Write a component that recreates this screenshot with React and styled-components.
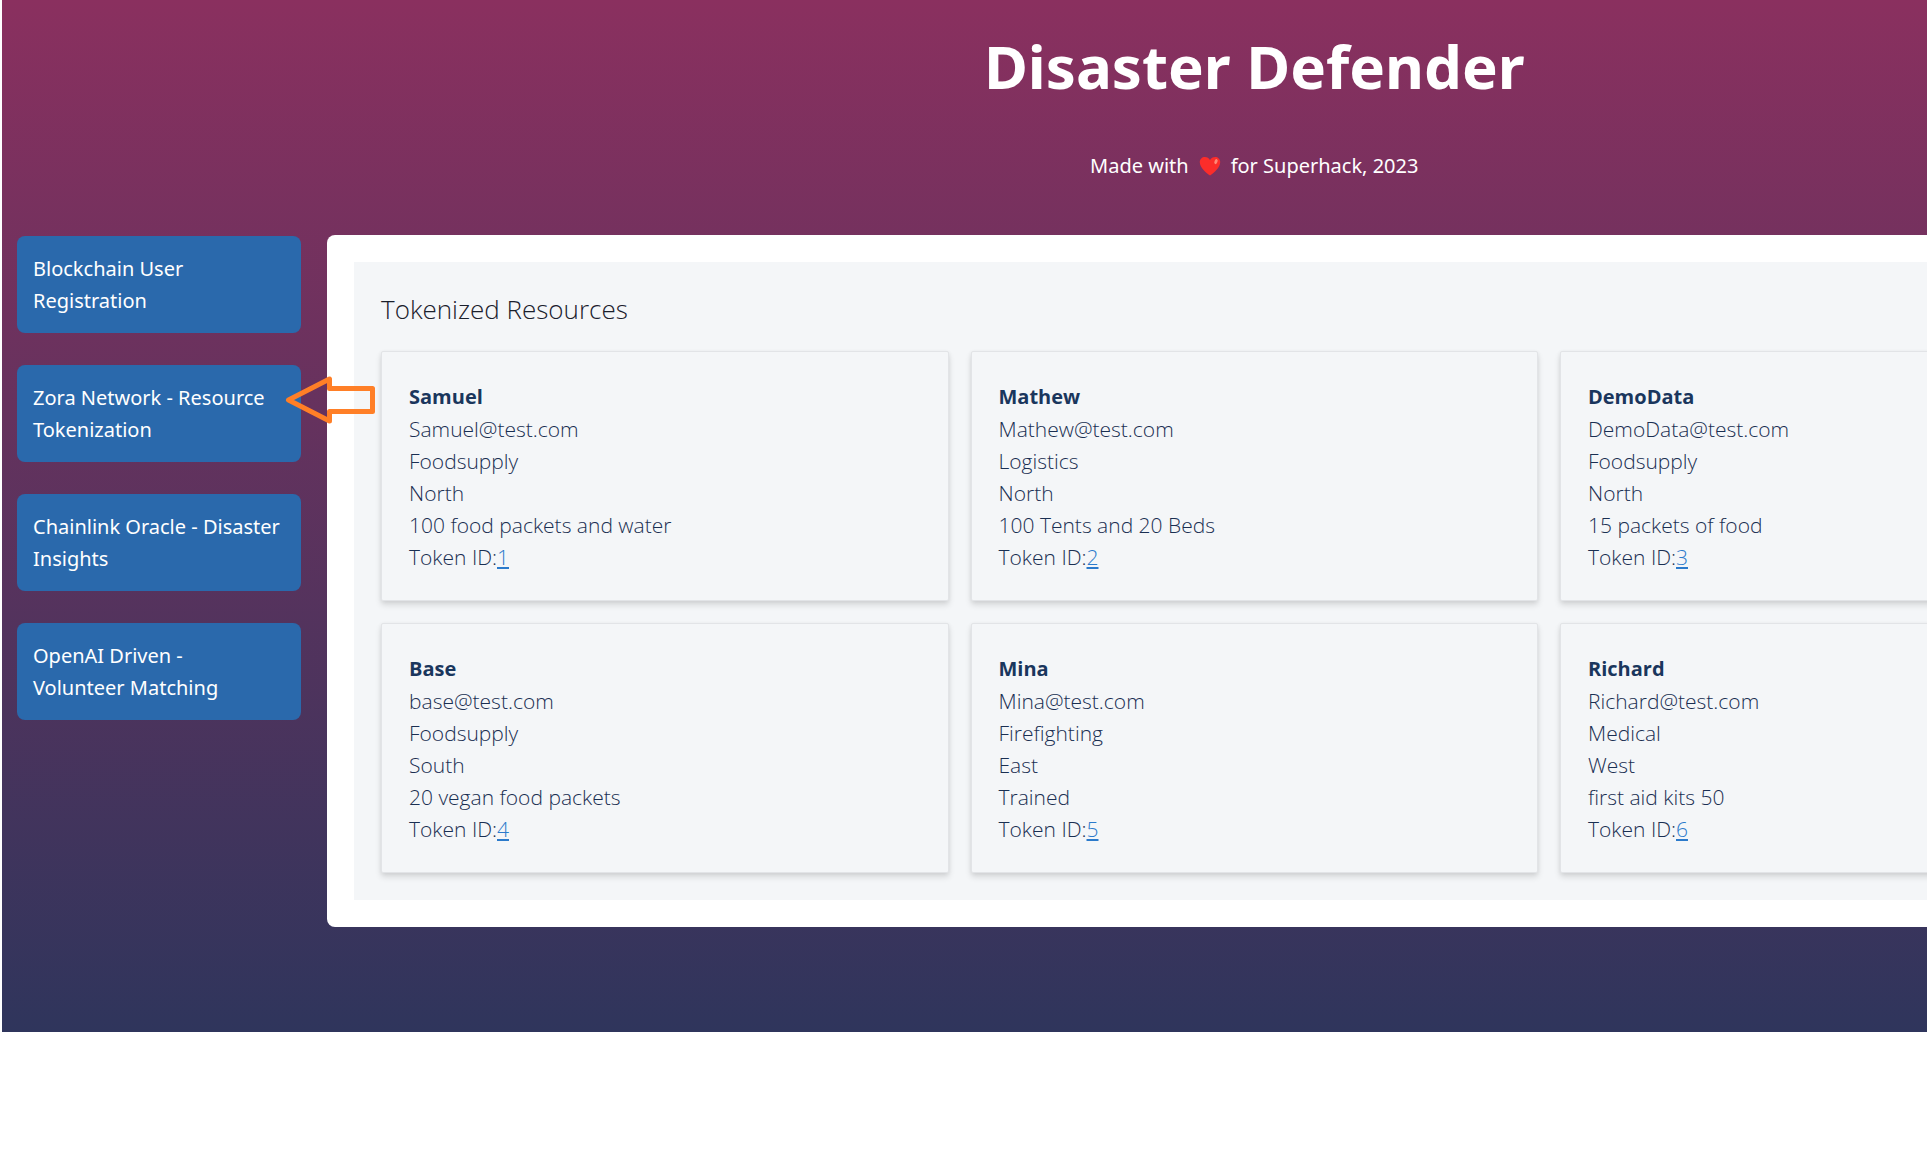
import React from 'react';
import styled, { createGlobalStyle } from 'styled-components';

const GlobalStyle = createGlobalStyle`
  * {
    box-sizing: border-box;
  }
  body {
    margin: 0;
    background: #fff;
    font-family: 'Noto Sans', 'Open Sans', sans-serif;
    font-size: 20px;
    line-height: 32px;
  }
`;

const Viewport = styled.div`
  overflow-x: hidden;
  padding-left: 2px;
`;

const Page = styled.div`
  width: 114%;
  display: grid;
  grid-template-columns: 284px minmax(0, 1fr);
  column-gap: 26px;
  padding: 0 15px 105px;
  background: linear-gradient(to bottom, #8a305f, #2f355c);
`;

const Header = styled.header`
  grid-column: 2;
  display: flex;
  flex-direction: column;
  align-items: center;
  gap: 44px;
  padding: 26px 0 53px;
  color: #fff;
`;

const Title = styled.h1`
  margin: 0;
  font-size: 60px;
  font-weight: 700;
  line-height: 80px;
`;

const Tagline = styled.p`
  display: flex;
  align-items: center;
  gap: 10px;
  margin: 0;
`;

const Sidebar = styled.nav`
  padding-top: 1px;
`;

const NavList = styled.ul`
  display: flex;
  flex-direction: column;
  gap: 32px;
  margin: 0;
  padding: 0;
  list-style: none;
`;

const NavItem = styled.li`
  position: relative;
`;

const NavButton = styled.button`
  display: block;
  width: 100%;
  padding: 17px 16px 16px;
  border: 0;
  border-radius: 8px;
  background: #2a69ac;
  color: #fff;
  font: inherit;
  text-align: left;
  cursor: pointer;
`;

const Pointer = styled.svg`
  position: absolute;
  top: 10px;
  right: -75px;
  z-index: 1;
  pointer-events: none;
`;

const Main = styled.main`
  padding: 27px;
  border-radius: 8px;
  background: #fff;
`;

const Resources = styled.section`
  padding: 27px;
  background: #f4f6f8;
  font-family: 'Open Sans', 'Noto Sans', sans-serif;
`;

const SectionTitle = styled.h2`
  margin: 0 0 22px;
  color: #1a202c;
  font-size: 26px;
  font-weight: 350;
  line-height: 40px;
`;

const CardGrid = styled.div`
  display: grid;
  grid-template-columns: repeat(3, 1fr);
  gap: 22px;
`;

const Card = styled.article`
  padding: 28px 27px 27px;
  border: 1px solid #e2e4e7;
  border-radius: 2px;
  background: #f4f6f8;
  box-shadow: 0 4px 6px rgba(0, 0, 0, 0.12), 0 1px 4px rgba(0, 0, 0, 0.06);
`;

const Name = styled.h3`
  margin: 0;
  color: #1a365d;
  font-size: 20px;
  font-weight: 700;
  line-height: 33px;
`;

const Detail = styled.p`
  margin: 0;
  color: #1a2f52;
  font-size: 21px;
  font-weight: 350;
`;

const TokenLink = styled.a`
  color: #2b7acb;
  text-decoration: underline;
  text-decoration-thickness: 2px;
  text-underline-offset: 2px;
`;

const navItems = [
  { label: 'Blockchain User Registration' },
  { label: 'Zora Network - Resource Tokenization', active: true },
  { label: 'Chainlink Oracle - Disaster Insights' },
  { label: 'OpenAI Driven - Volunteer\u00a0Matching' },
];

const resources = [
  {
    id: 1,
    name: 'Samuel',
    email: 'Samuel@test.com',
    type: 'Foodsupply',
    region: 'North',
    description: '100 food packets and water',
  },
  {
    id: 2,
    name: 'Mathew',
    email: 'Mathew@test.com',
    type: 'Logistics',
    region: 'North',
    description: '100 Tents and 20 Beds',
  },
  {
    id: 3,
    name: 'DemoData',
    email: 'DemoData@test.com',
    type: 'Foodsupply',
    region: 'North',
    description: '15 packets of food',
  },
  {
    id: 4,
    name: 'Base',
    email: 'base@test.com',
    type: 'Foodsupply',
    region: 'South',
    description: '20 vegan food packets',
  },
  {
    id: 5,
    name: 'Mina',
    email: 'Mina@test.com',
    type: 'Firefighting',
    region: 'East',
    description: 'Trained',
  },
  {
    id: 6,
    name: 'Richard',
    email: 'Richard@test.com',
    type: 'Medical',
    region: 'West',
    description: 'first aid kits 50',
  },
];

const Heart = () => (
  <svg width="22" height="20" viewBox="0 0 22 20" aria-hidden="true">
    <path
      d="M11 19.5C7.5 17 .8 11.8.8 6.2.8 3 3.1 1 5.9 1c2.2 0 4 1.1 5.1 3C12.1 2.1 13.9 1 16.1 1c2.8 0 5.1 2 5.1 5.2C21.2 11.8 14.5 17 11 19.5z"
      fill="#fb2d2a"
    />
    <ellipse
      cx="17"
      cy="5.6"
      rx="1.500"
      ry="2.600"
      transform="rotate(20 17 5.6)"
      fill="#ff8a78"
    />
  </svg>
);

const PointerArrow = () => (
  <Pointer width="92" height="50" viewBox="0 0 92 50" aria-hidden="true">
    <path
      d="M4.500 25 45.500 4V13.500H88.500V36.500H45.500V46z"
      fill="none"
      stroke="#ff7f27"
      strokeWidth="5"
      strokeLinejoin="round"
    />
  </Pointer>
);

const ResourceCard = ({ resource }) => (
  <Card>
    <Name>{resource.name}</Name>
    <Detail>{resource.email}</Detail>
    <Detail>{resource.type}</Detail>
    <Detail>{resource.region}</Detail>
    <Detail>{resource.description}</Detail>
    <Detail>
      Token ID:
      <TokenLink href={`#token-${resource.id}`}>{resource.id}</TokenLink>
    </Detail>
  </Card>
);

const App = () => (
  <Viewport>
    <GlobalStyle />
    <Page>
      <Header>
        <Title>Disaster Defender</Title>
        <Tagline>
          <span>Made with</span>
          <Heart />
          <span>for Superhack, 2023</span>
        </Tagline>
      </Header>
      <Sidebar>
        <NavList>
          {navItems.map(({ label, active }) => (
            <NavItem key={label}>
              <NavButton type="button">{label}</NavButton>
              {active && <PointerArrow />}
            </NavItem>
          ))}
        </NavList>
      </Sidebar>
      <Main>
        <Resources>
          <SectionTitle>Tokenized Resources</SectionTitle>
          <CardGrid>
            {resources.map((resource) => (
              <ResourceCard key={resource.id} resource={resource} />
            ))}
          </CardGrid>
        </Resources>
      </Main>
    </Page>
  </Viewport>
);

export default App;
